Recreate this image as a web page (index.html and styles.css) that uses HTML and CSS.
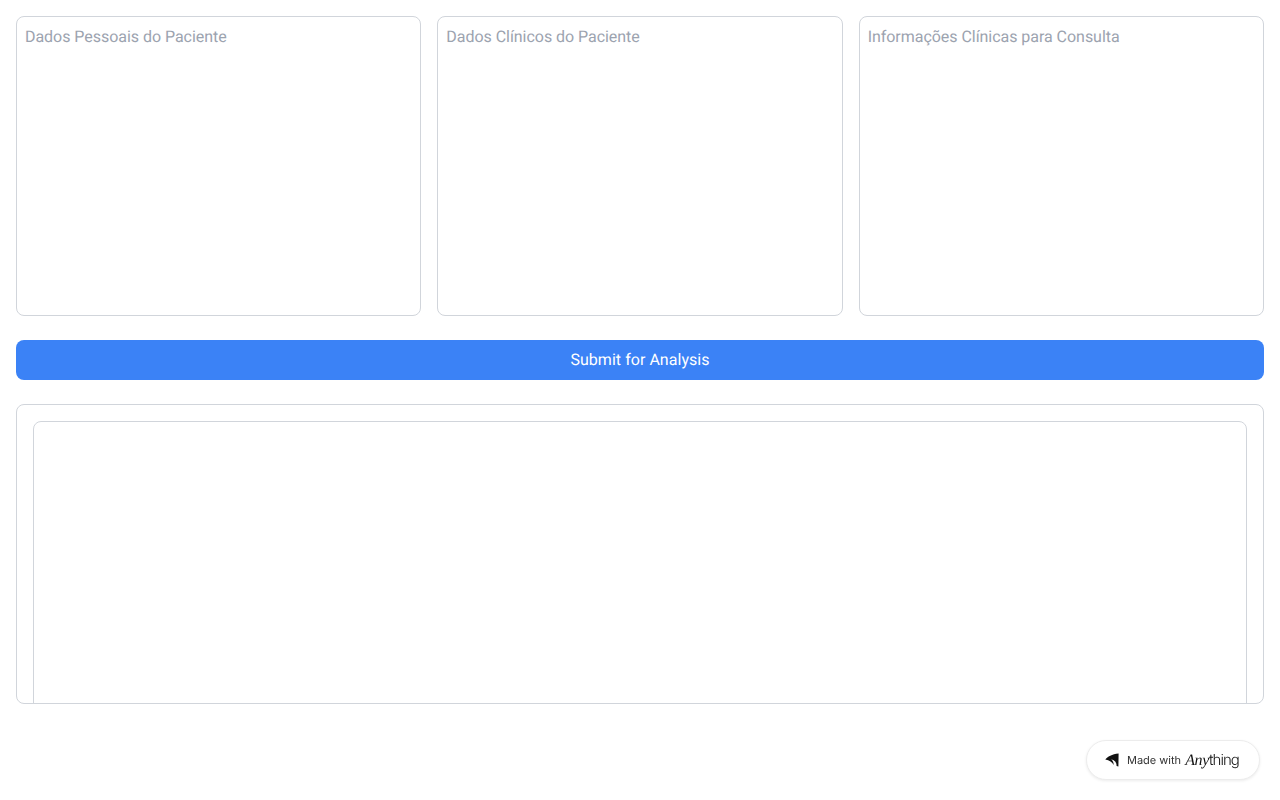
FILE: index.html
```html
<!DOCTYPE html>
<html lang="pt">
<head>
<meta charset="utf-8">
<title>Análise Clínica</title>
<link rel="stylesheet" href="styles.css">
</head>
<body>
<main class="page">
  <section class="cards">
    <textarea class="card" placeholder="Dados Pessoais do Paciente"></textarea>
    <textarea class="card" placeholder="Dados Clínicos do Paciente"></textarea>
    <textarea class="card" placeholder="Informações Clínicas para Consulta"></textarea>
  </section>
  <button class="submit" type="button">Submit for Analysis</button>
  <section class="result">
    <div class="result-inner"></div>
  </section>
</main>
<a class="badge" href="#">
  <svg class="badge-icon" width="14" height="14" viewBox="0 0 14 14" aria-hidden="true">
    <path d="M0.3 6.6C2.5 3.4 7 1 13.6 0.4L13.4 13.6L11.6 13C11.8 9.8 10 7.2 6.2 6.2C8 7.8 8.9 9.8 8.6 12C7.4 9.4 4.4 7 0.3 6.6Z" fill="#111"/>
  </svg>
  <span class="badge-text">Made with</span>
  <span class="brand"><span class="brand-any">Any</span><span class="brand-thing">thing</span></span>
</a>
</body>
</html>
```
FILE: styles.css
```css
* { box-sizing: border-box; }
html, body { margin: 0; padding: 0; background: #fff; }
body {
  font-family: Roboto, "Liberation Sans", sans-serif;
  text-rendering: geometricPrecision;
}
.page {
  display: flex;
  flex-direction: column;
  gap: 24px;
  padding: 16px;
}
.cards {
  display: grid;
  grid-template-columns: repeat(3, 1fr);
  gap: 16px;
}
.card {
  display: block;
  width: 100%;
  height: 300px;
  padding: 8px;
  border: 1px solid #d1d5db;
  border-radius: 8px;
  background: #fff;
  font-family: inherit;
  font-size: 16px;
  line-height: 24px;
  letter-spacing: -0.04px;
  color: #111827;
  text-rendering: geometricPrecision;
  resize: none;
  outline: none;
}
.card::placeholder { color: #9ca3af; opacity: 1; }
.submit {
  display: block;
  width: 100%;
  height: 40px;
  padding: 0 0 2px;
  border: 0;
  border-radius: 8px;
  background: #3b82f6;
  color: #fff;
  font-family: inherit;
  font-size: 16px;
  letter-spacing: 0.04px;
  text-rendering: geometricPrecision;
}
.result {
  height: 300px;
  padding: 16px;
  border: 1px solid #d1d5db;
  border-radius: 8px;
  overflow: hidden;
}
.result-inner {
  height: 400px;
  border: 1px solid #d1d5db;
  border-radius: 8px;
}
.badge {
  position: fixed;
  right: 20px;
  bottom: 20px;
  display: flex;
  align-items: center;
  width: 174px;
  height: 40px;
  padding-left: 18px;
  border: 1px solid #ececec;
  border-radius: 20px;
  background: #fff;
  box-shadow: 0 1px 3px rgba(0, 0, 0, 0.08);
  color: #333;
  text-decoration: none;
}
.badge-icon { flex: none; margin-right: 8px; }
.badge-text {
  font-family: Inter, sans-serif;
  font-size: 11px;
  line-height: 14px;
  margin-right: 4px;
}
.brand { display: flex; align-items: baseline; color: #111; }
.brand-any {
  font-family: "Liberation Serif", serif;
  font-style: italic;
  font-size: 16px;
  letter-spacing: -0.3px;
}
.brand-thing {
  font-family: Inter, sans-serif;
  font-weight: 300;
  font-size: 15px;
  letter-spacing: -1px;
}
```
